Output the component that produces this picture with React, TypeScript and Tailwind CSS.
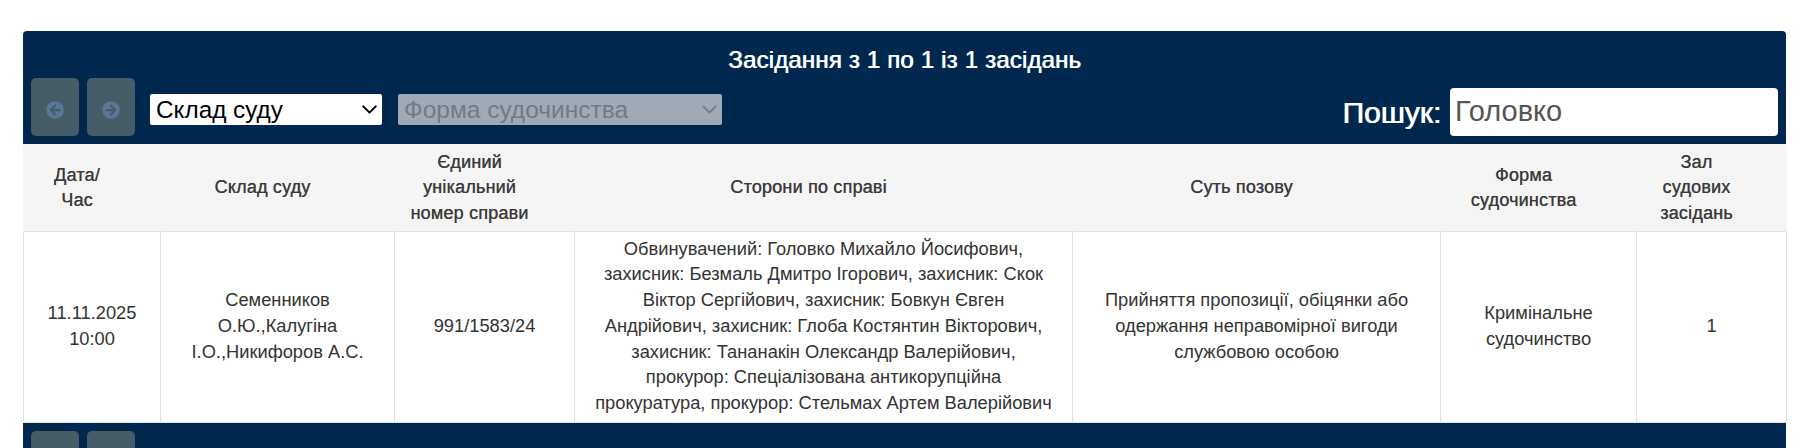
import { FaArrowCircleLeft, FaArrowCircleRight } from "react-icons/fa";
import { ChevronDown } from "lucide-react";

const font = "[font-family:'Liberation_Sans',Arial,sans-serif]";

function NavButtons() {
  return (
    <div className="flex gap-2">
      <button disabled className="w-12 h-[58px] pt-[6px] rounded-[5px] bg-[#465d68] flex items-center justify-center text-[#5a7698] text-lg">
        <FaArrowCircleLeft />
      </button>
      <button disabled className="w-12 h-[58px] pt-[6px] rounded-[5px] bg-[#465d68] flex items-center justify-center text-[#5a7698] text-lg">
        <FaArrowCircleRight />
      </button>
    </div>
  );
}

const th = "border-x border-[#f5f5f5] pl-2 pr-[38px] pt-[2px] text-center align-middle font-normal text-[#3a3a3a] text-[18px] tracking-[0.2px] leading-[25.7px] [text-shadow:0.3px_0_0.4px_#555]";
const td = "border-x border-[#e2e2e2] px-2 pb-[2px] text-center align-middle text-[#333] text-[18.3px] leading-[25.7px]";

export default function App() {
  return (
    <div className={`h-[448px] overflow-hidden bg-white pt-[31px] pl-[23px] pr-[21px] ${font}`}>
      <div className="bg-[#00284f] rounded-t-[4px] h-[113px] flex flex-col pl-2 pr-2">
        <h1 className="h-[47px] pt-[13px] text-center text-white text-[24px] tracking-[0.18px] leading-[32px] font-normal [text-shadow:0.7px_0_0_#fff]">
          Засідання з 1 по 1 із 1 засідань
        </h1>
        <div className="flex items-end">
          <NavButtons />
          <div className="relative ml-[15px] mb-[11px]">
            <select className="block w-[232px] h-[31px] appearance-none bg-white text-black text-[24.3px] leading-[31px] pl-[6px] rounded-[2px]" defaultValue="a">
              <option value="a">Склад суду</option>
            </select>
            <ChevronDown size={25} strokeWidth={2} className="absolute right-0 top-[3px] text-black pointer-events-none" />
          </div>
          <div className="relative ml-4 mb-[11px]">
            <select disabled className="block w-[324px] h-[31px] appearance-none bg-[#a0aab7] text-[#707a85] text-[24.5px] leading-[31px] pl-[6px] rounded-[2px] opacity-100" defaultValue="a">
              <option value="a">Форма судочинства</option>
            </select>
            <ChevronDown size={25} strokeWidth={1.6} className="absolute right-0 top-[3px] text-[#707a85] pointer-events-none" />
          </div>
          <div className="ml-auto flex items-center gap-[9px]">
            <span className="text-white text-[30px] font-normal [text-shadow:0.8px_0_0_#fff]">Пошук:</span>
            <input
              readOnly
              value="Головко"
              className="w-[328px] h-12 rounded-[4px] bg-white pl-[5px] pr-[6px] pb-[2px] text-[29px] text-[#555] outline-none"
            />
          </div>
        </div>
      </div>
      <table className="w-full table-fixed border-collapse bg-white">
        <colgroup>
          <col className="w-[137px]" />
          <col className="w-[234px]" />
          <col className="w-[180px]" />
          <col className="w-[498px]" />
          <col className="w-[368px]" />
          <col className="w-[196px]" />
          <col className="w-[150px]" />
        </colgroup>
        <thead>
          <tr className="h-[87px] bg-[#f5f5f5] border-b border-[#e2e2e2]">
            <th className={th}>Дата/<br />Час</th>
            <th className={th}>Склад суду</th>
            <th className={th}>Єдиний<br />унікальний<br />номер справи</th>
            <th className={th}>Сторони по справі</th>
            <th className={th}>Суть позову</th>
            <th className={th}>Форма<br />судочинства</th>
            <th className={th}>Зал<br />судових<br />засідань</th>
          </tr>
        </thead>
        <tbody>
          <tr className="h-[191px]">
            <td className={td}>11.11.2025<br />10:00</td>
            <td className={td}>Семенников<br />О.Ю.,Калугіна<br />І.О.,Никифоров А.С.</td>
            <td className={td}>991/1583/24</td>
            <td className={td}>Обвинувачений: Головко Михайло Йосифович,<br />захисник: Безмаль Дмитро Ігорович, захисник: Скок<br />Віктор Сергійович, захисник: Бовкун Євген<br />Андрійович, захисник: Глоба Костянтин Вікторович,<br />захисник: Тананакін Олександр Валерійович,<br />прокурор: Спеціалізована антикорупційна<br />прокуратура, прокурор: Стельмах Артем Валерійович</td>
            <td className={td}>Прийняття пропозиції, обіцянки або<br />одержання неправомірної вигоди<br />службовою особою</td>
            <td className={td}>Кримінальне<br />судочинство</td>
            <td className={td}>1</td>
          </tr>
        </tbody>
      </table>
      <div className="bg-[#00284f] pt-2 pl-2 border-t border-[#e2e2e2]">
        <NavButtons />
      </div>
    </div>
  );
}
